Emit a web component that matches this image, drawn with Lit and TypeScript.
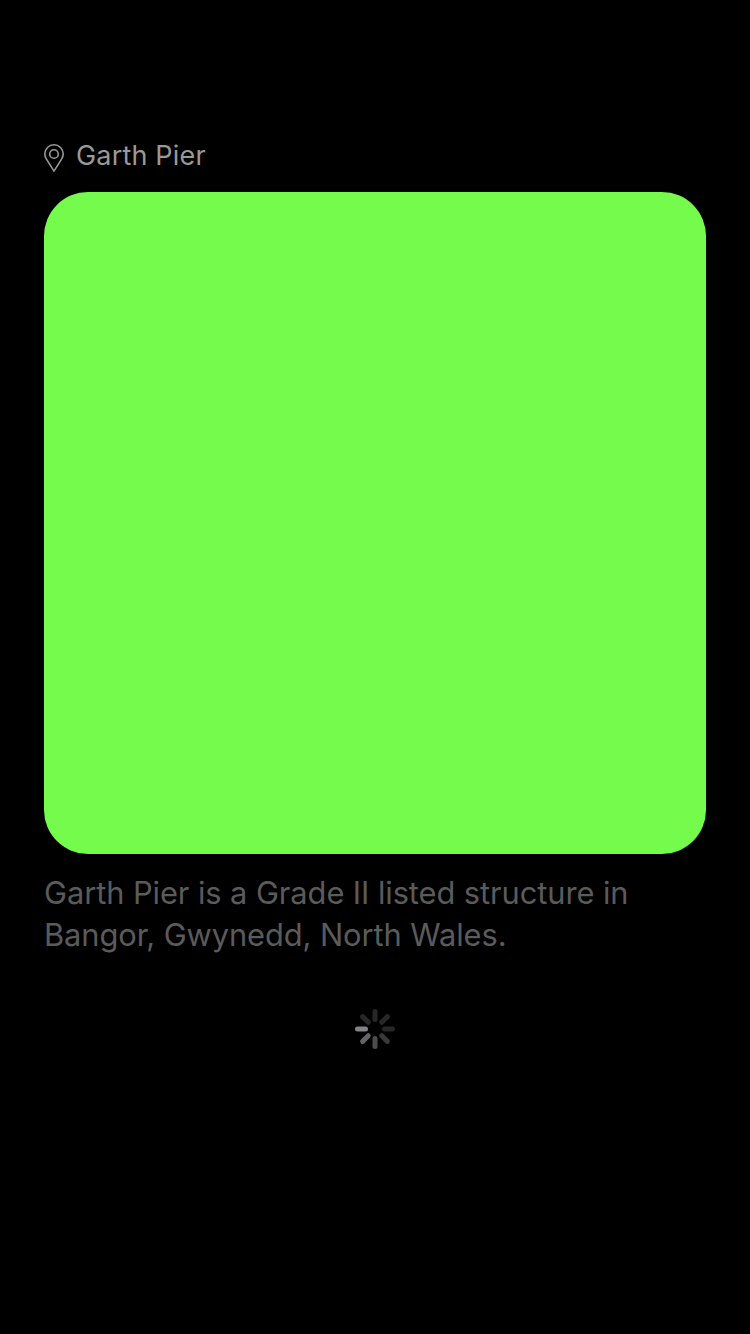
import { LitElement, html, css, svg } from "lit";
import { customElement } from "lit/decorators.js";

const BLADES = ["#272729", "#272729", "#272729", "#39393b", "#4c4c4e", "#636366", "#838388", "#272729"];

@customElement("app-root")
export class AppRoot extends LitElement {
  static styles = css`
    :host { display: block; height: 1334px; background: #000; overflow: hidden; font-family: Inter, sans-serif; }
    .screen { display: flex; flex-direction: column; padding: 138px 44px 0; }
    .place { display: flex; align-items: center; height: 36px; margin-bottom: 18px; color: #999; }
    .pin { display: block; width: 20px; height: 30px; margin-right: 12px; margin-top: 6px; }
    .name { font-size: 27px; line-height: 36px; letter-spacing: 0.18px; white-space: nowrap; }
    .picture { height: 662px; border-radius: 44px; background: #75fb4c; }
    .caption { margin: 18px 0 0; color: #5b5b5b; font-size: 30.8px; line-height: 42px; letter-spacing: -0.065px; white-space: nowrap; }
    .spinner { display: block; width: 40px; height: 40px; margin: 53px auto 0; }
  `;

  render() {
    return html`
      <main class="screen">
        <div class="place">
          <svg class="pin" viewBox="0 0 20 30" fill="none" stroke="currentColor" stroke-width="1.6" stroke-linejoin="round">
            <path d="M10 27.2 2.3 14.9C1.3 13.2.8 11.8.8 10a9.2 9.2 0 0 1 18.4 0c0 1.8-.5 3.2-1.5 4.9Z" />
            <circle cx="10" cy="10" r="4.3" />
          </svg>
          <span class="name">Garth Pier</span>
        </div>
        <div class="picture"></div>
        <p class="caption">Garth Pier is a Grade II listed structure in<br />Bangor, Gwynedd, North Wales.</p>
        <svg class="spinner" viewBox="0 0 40 40">
          ${BLADES.map((c, i) => svg`<rect x="17.5" y="0" width="5" height="13" rx="2.5" fill=${c} transform="rotate(${i * 45} 20 20)" />`)}
        </svg>
      </main>
    `;
  }
}
